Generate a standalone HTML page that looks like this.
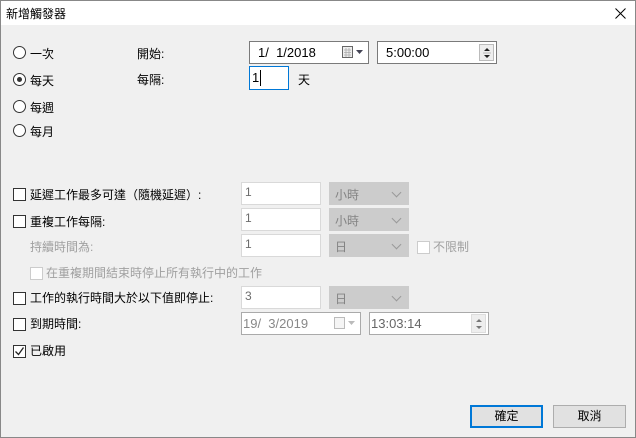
<!DOCTYPE html>
<html><head><meta charset="utf-8"><style>
*{box-sizing:border-box;margin:0;padding:0}
body{width:636px;height:438px;background:#f0f0f0;font-family:"Liberation Sans","Noto Sans CJK TC",sans-serif;font-size:12px;color:#000;position:relative;overflow:hidden}
.a{position:absolute}
.title{left:0;top:0;width:636px;height:25px;background:#fff;border:1px solid #888;border-bottom:none}
.title span{position:absolute;left:5px;top:4px;font-size:12px}
.frame{left:0;top:25px;width:636px;height:413px;border:1px solid #888;border-top:none}
.rad{width:13px;height:13px;border:1px solid #333;border-radius:50%;background:#fff}
.rad.on::after{content:"";position:absolute;left:3px;top:3px;width:5px;height:5px;border-radius:50%;background:#333}
.cb{width:13px;height:13px;border:1px solid #333;background:#fff}
.cb.dis{border-color:#ccc}
.box{background:#fff;border:1px solid #7a7a7a}
.in{background:#fff;border:1px solid #d9d9d9;color:#6d6d6d;padding:2px 0 0 3px}
.combo{background:#ccc;border:1px solid #ccc;color:#838383;padding:3px 0 0 5px}
.combo::after{content:"";position:absolute;right:8px;top:6px;width:6px;height:6px;border-right:1px solid #999;border-bottom:1px solid #999;transform:rotate(45deg)}
.g{color:#a0a0a0}
.btn{background:#e1e1e1;border:1px solid #adadad;text-align:center;line-height:20px}
</style></head><body>
<div class="a title"><span>新增觸發器</span></div>
<svg class="a" style="left:615px;top:8px" width="11" height="11"><path d="M0.5 0.5L10.5 10.5M10.5 0.5L0.5 10.5" stroke="#000" stroke-width="1"/></svg>
<div class="a frame"></div>

<div class="a rad" style="left:13px;top:46px"></div><div class="a" style="left:30px;top:45px">一次</div>
<div class="a rad on" style="left:13px;top:73px"></div><div class="a" style="left:30px;top:72px">每天</div>
<div class="a rad" style="left:13px;top:100px"></div><div class="a" style="left:30px;top:99px">每週</div>
<div class="a rad" style="left:13px;top:124px"></div><div class="a" style="left:30px;top:123px">每月</div>

<div class="a" style="left:137px;top:45px">開始:</div>
<div class="a" style="left:137px;top:71px">每隔:</div>
<div class="a box" style="left:249px;top:41px;width:120px;height:23px"><span class="a" style="left:8px;top:3px;font-size:13px">1/&nbsp; 1/2018</span>
<svg class="a" style="left:92px;top:4px" width="24" height="13"><rect x="0.5" y="0.5" width="10" height="11" fill="#eee" stroke="#666"/><path d="M2 4h7M2 6.5h7M2 9h7M4 2v9M7 2v9" stroke="#aaa" stroke-width=".8"/><path d="M14 4h7l-3.5 4z" fill="#445"/></svg></div>
<div class="a box" style="left:377px;top:41px;width:120px;height:23px"><span class="a" style="left:8px;top:3px;font-size:13px">5:00:00</span>
<div class="a" style="left:101px;top:2px;width:15px;height:17px;background:#eee;border:1px solid #bbb"><svg class="a" style="left:3px;top:2px" width="8" height="12"><path d="M4 1l3 3H1zM1 8h6l-3 3z" fill="#222"/><path d="M0 6h8" stroke="#bbb"/></svg></div></div>
<div class="a" style="left:249px;top:66px;width:40px;height:24px;background:#fff;border:1px solid #0078d7"><span class="a" style="left:2px;top:3px;font-size:13px">1</span><span class="a" style="left:10px;top:3px;width:1px;height:16px;background:#000"></span></div>
<div class="a" style="left:298px;top:71px">天</div>

<div class="a cb" style="left:13px;top:188px"></div><div class="a" style="left:30px;top:186px">延遲工作最多可達（隨機延遲）:</div>
<div class="a in" style="left:241px;top:182px;width:80px;height:23px">1</div>
<div class="a combo" style="left:329px;top:182px;width:80px;height:23px">小時</div>

<div class="a cb" style="left:13px;top:215px"></div><div class="a" style="left:30px;top:213px">重複工作每隔:</div>
<div class="a in" style="left:241px;top:208px;width:80px;height:23px">1</div>
<div class="a combo" style="left:329px;top:208px;width:80px;height:23px">小時</div>

<div class="a g" style="left:30px;top:238px">持續時間為:</div>
<div class="a in" style="left:241px;top:234px;width:80px;height:23px">1</div>
<div class="a combo" style="left:329px;top:234px;width:80px;height:23px">日</div>
<div class="a cb dis" style="left:417px;top:241px"></div><div class="a g" style="left:433px;top:238px">不限制</div>

<div class="a cb dis" style="left:30px;top:267px"></div><div class="a g" style="left:46px;top:264px">在重複期間結束時停止所有執行中的工作</div>

<div class="a cb" style="left:13px;top:292px"></div><div class="a" style="left:30px;top:289px">工作的執行時間大於以下值即停止:</div>
<div class="a in" style="left:241px;top:286px;width:80px;height:23px">3</div>
<div class="a combo" style="left:329px;top:286px;width:80px;height:23px">日</div>

<div class="a cb" style="left:13px;top:318px"></div><div class="a" style="left:30px;top:315px">到期時間:</div>
<div class="a box" style="left:241px;top:312px;width:120px;height:23px;border-color:#aaa;color:#888"><span class="a" style="left:1px;top:3px;font-size:13px">19/&nbsp; 3/2019</span>
<svg class="a" style="left:92px;top:4px" width="24" height="13"><rect x="0.5" y="0.5" width="10" height="11" fill="#f5f5f5" stroke="#bbb"/><path d="M14 4h7l-3.5 4z" fill="#bbb"/></svg></div>
<div class="a box" style="left:369px;top:312px;width:120px;height:23px;border-color:#aaa;color:#666"><span class="a" style="left:1px;top:3px;font-size:13px">13:03:14</span>
<div class="a" style="left:101px;top:1px;width:15px;height:19px;background:#eee;border:1px solid #ddd"><svg class="a" style="left:3px;top:3px" width="8" height="12"><path d="M4 1l3 3H1zM1 8h6l-3 3z" fill="#777"/></svg></div></div>

<div class="a cb" style="left:13px;top:345px"></div>
<svg class="a" style="left:14px;top:346px" width="11" height="11"><path d="M1.5 5.5l3 3 5-7" fill="none" stroke="#222" stroke-width="1.3"/></svg>
<div class="a" style="left:30px;top:342px">已啟用</div>

<div class="a btn" style="left:470px;top:405px;width:73px;height:23px;border:2px solid #0078d7;line-height:19px">確定</div>
<div class="a btn" style="left:553px;top:405px;width:73px;height:23px">取消</div>
</body></html>
